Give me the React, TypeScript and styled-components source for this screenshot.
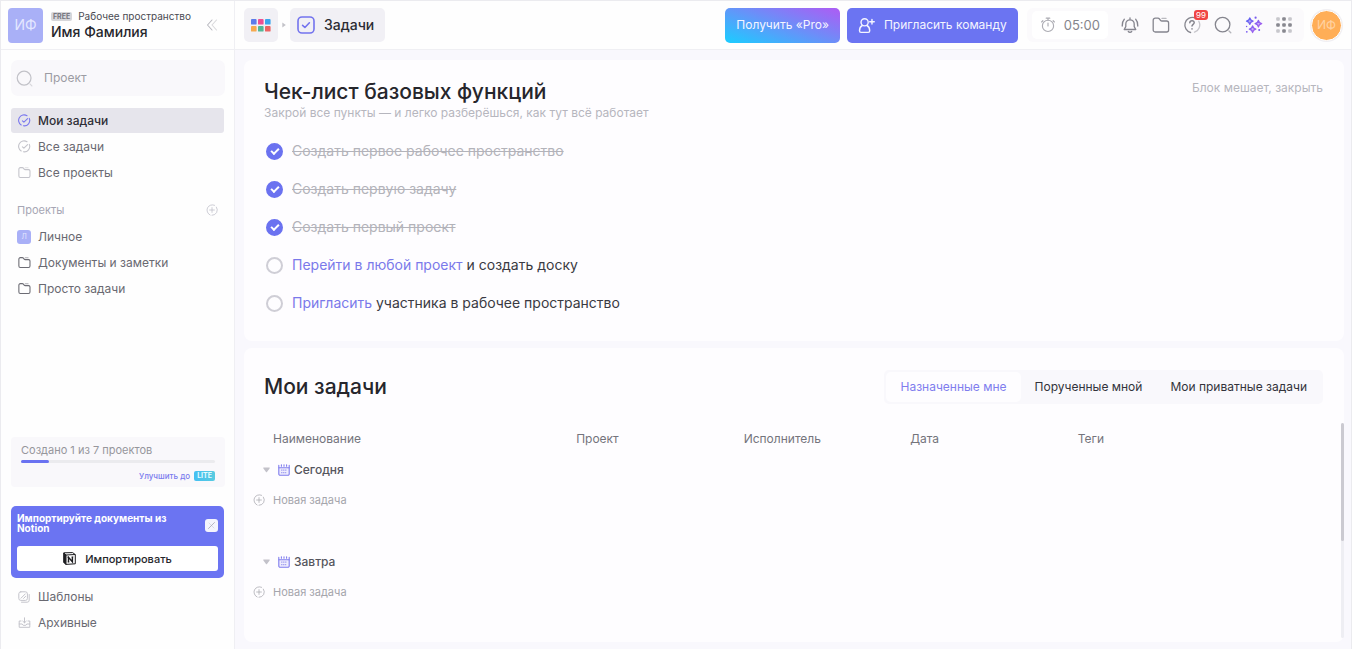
import React from "react";
import styled, { createGlobalStyle, css } from "styled-components";

const Global = createGlobalStyle`
  *, *::before, *::after { box-sizing: border-box; }
  body { margin: 0; font-family: Inter, "Liberation Sans", sans-serif; font-size: 12px; line-height: 16px; color: #2b2b33; background: #f9f8fd; }
  button, input { font: inherit; color: inherit; }
  button { border: 0; padding: 0; background: none; cursor: pointer; }
  a { text-decoration: none; color: inherit; }
  h1, h2, p, ul { margin: 0; padding: 0; }
  ul { list-style: none; }
  svg { display: block; flex: none; }
`;

const Page = styled.div`
  min-height: 100vh;
  display: grid;
  grid-template-columns: 234px minmax(0, 1fr);
  border: 1px solid #ebebef;
`;

/* ---------- sidebar ---------- */
const Sidebar = styled.aside`
  display: flex;
  flex-direction: column;
  background: #fefefe;
  border-right: 1px solid #efeff3;
`;
const Workspace = styled.header`
  display: flex;
  align-items: center;
  gap: 8px;
  height: 49px;
  padding: 0 16px 0 7px;
  border-bottom: 1px solid #efeff3;
`;
const WorkspaceLogo = styled.div`
  width: 35px;
  height: 35px;
  border-radius: 4px;
  display: grid;
  place-items: center;
  background: #a9b0f7;
  color: #e4e7ff;
  font-size: 14px;
`;
const WorkspaceText = styled.div`
  flex: 1;
  min-width: 0;
  white-space: nowrap;
`;
const WorkspaceKind = styled.div`
  display: flex;
  align-items: center;
  gap: 6px;
  font-size: 10px;
  line-height: 14px;
  color: #4a4a52;
`;
const FreeBadge = styled.span`
  padding: 0 2px;
  border-radius: 2px;
  background: #d6d6da;
  color: #77777f;
  font-size: 7px;
  font-weight: 700;
  line-height: 9px;
`;
const WorkspaceName = styled.div`
  font-size: 14px;
  line-height: 18px;
  font-weight: 500;
  color: #26262c;
`;
const IconButton = styled.button`
  display: grid;
  place-items: center;
  color: ${(p) => p.color || "#85858e"};
`;
const Search = styled.label`
  display: flex;
  align-items: center;
  gap: 11px;
  height: 36px;
  margin: 10px 9px 12px 10px;
  padding: 0 5px;
  border-radius: 7px;
  background: #f9f8fb;
  color: #c2c2c8;
`;
const SearchInput = styled.input`
  flex: 1;
  min-width: 0;
  padding: 0;
  border: 0;
  outline: 0;
  background: transparent;
  color: #55555d;
  &::placeholder { color: #9c9ca3; opacity: 1; }
`;
const NavList = styled.ul`
  display: flex;
  flex-direction: column;
  gap: 1px;
  padding: 0 10px;
`;
const NavLink = styled.a<{ $active?: boolean }>`
  display: flex;
  align-items: center;
  gap: 7px;
  height: 25px;
  padding: 0 6px;
  border-radius: 3px;
  font-weight: ${(p) => (p.$active ? 500 : 400)};
  color: ${(p) => (p.$active ? "#2e2e36" : "#696971")};
  background: ${(p) => (p.$active ? "#e6e5ec" : "transparent")};
`;
const NavIcon = styled.span<{ $tone?: string }>`
  width: 14px;
  display: grid;
  place-items: center;
  color: ${(p) => p.$tone || "#c4c4cb"};
`;
const ProjectMark = styled.span`
  width: 14px;
  height: 14px;
  border-radius: 3px;
  display: grid;
  place-items: center;
  background: #a9b0f7;
  color: #e4e7ff;
  font-size: 7px;
  line-height: 8px;
`;
const SectionHead = styled.div`
  display: flex;
  align-items: center;
  justify-content: space-between;
  padding: 0 16px;
  margin: 17px 0 6px;
  font-size: 11px;
  height: 16px;
  color: #a6a6b4;
`;
const SidebarBottom = styled.div`
  margin-top: auto;
  padding: 8px 0 16px;
`;
const Quota = styled.section`
  margin: 0 9px 19px 10px;
  height: 50px;
  padding: 5px 10px 4px;
  border-radius: 4px;
  background: #f9f8fb;
`;
const QuotaText = styled.p`
  font-size: 11px;
  color: #96969c;
`;
const QuotaTrack = styled.div`
  height: 3px;
  margin: 2px 0 4px;
  border-radius: 2px;
  background: #ebebee;
`;
const QuotaFill = styled.div`
  height: 100%;
  border-radius: 2px;
  background: #6a72f1;
`;
const Upgrade = styled.a`
  display: flex;
  align-items: center;
  justify-content: flex-end;
  gap: 4px;
  height: 18px;
  font-size: 8px;
  font-weight: 500;
  color: #7b7cee;
`;
const LiteBadge = styled.span`
  padding: 0 3px;
  border-radius: 2px;
  background: linear-gradient(90deg, #45c0f2, #58cbe0);
  color: #e4fbff;
  font-size: 7px;
  font-weight: 700;
  line-height: 10px;
`;
const Import = styled.section`
  margin: 0 10px 6px;
  padding: 7px 6px;
  border-radius: 5px;
  background: #6b74f2;
`;
const ImportHead = styled.div`
  display: flex;
  justify-content: space-between;
  align-items: center;
  gap: 12px;
  margin-bottom: 13px;
`;
const ImportTitle = styled.p`
  font-size: 10px;
  line-height: 10px;
  font-weight: 700;
  color: #fff;
`;
const CloseButton = styled.button`
  width: 13px;
  height: 13px;
  margin-top: 4px;
  flex: none;
  display: grid;
  place-items: center;
  border-radius: 3px;
  background: #f4f4fd;
  color: #a5a5b4;
`;
const ImportButton = styled.button`
  width: 100%;
  height: 25px;
  display: flex;
  align-items: center;
  justify-content: center;
  gap: 9px;
  border-radius: 3px;
  background: #fff;
  color: #26262c;
  font-size: 11px;
  font-weight: 500;
`;

/* ---------- top bar ---------- */
const Main = styled.main`
  display: flex;
  flex-direction: column;
  min-width: 0;
`;
const Topbar = styled.header`
  display: flex;
  align-items: center;
  height: 49px;
  padding: 0 9px;
  background: #fefefe;
  border-bottom: 1px solid #efeff3;
  white-space: nowrap;
`;
const Crumb = styled.button`
  display: flex;
  align-items: center;
  justify-content: center;
  gap: 9px;
  height: 34px;
  min-width: 34px;
  padding: 0 7px;
  border-radius: 5px;
  background: #f1f0f5;
  font-size: 14px;
  font-weight: 500;
`;
const CrumbLabel = styled.span`
  padding-right: 4px;
`;
const CrumbArrow = styled.span`
  padding: 0 4px;
  color: #c2c2c8;
`;
const Actions = styled.div`
  display: flex;
  align-items: center;
  gap: 7px;
  margin-left: auto;
`;
const ActionButton = styled.button<{ $pro?: boolean }>`
  display: flex;
  align-items: center;
  gap: 9px;
  height: 35px;
  padding: 0 11px;
  border-radius: 5px;
  color: #f4f5ff;
  background: ${(p) => (p.$pro ? "linear-gradient(20deg, #21c8ff 5%, #6f8cf8 55%, #a860f4 95%)" : "#6b74f2")};
`;
const Tools = styled.div`
  display: flex;
  align-items: center;
  gap: 13px;
  height: 34px;
  margin-left: 2px;
  padding: 0 12px 0 5px;
  border-radius: 6px;
  background: #fbfafc;
`;
const Timer = styled.button`
  display: flex;
  align-items: center;
  gap: 8px;
  height: 28px;
  padding: 0 8px;
  border-radius: 5px;
  background: #fff;
  color: #85858c;
  font-size: 13px;
`;
const TimerIcon = styled.span`
  color: #acacb3;
`;
const HelpWrap = styled.span`
  position: relative;
`;
const Count = styled.span`
  position: absolute;
  top: -6px;
  left: 11px;
  padding: 0 2px;
  border-radius: 3px;
  background: #f04444;
  color: #fff;
  font-size: 8px;
  line-height: 10px;
`;
const Avatar = styled.button`
  width: 31px;
  height: 31px;
  border: 1px solid #fff;
  border-radius: 50%;
  background: #ffae57;
  color: #ffd3a3;
  font-size: 12px;
  box-shadow: 0 0 0 1px #f0eff3;
`;

/* ---------- content ---------- */
const Content = styled.div`
  flex: 1;
  display: flex;
  flex-direction: column;
  gap: 7px;
  padding: 10px 7px 9px 9px;
`;
const Card = styled.section<{ $grow?: boolean }>`
  border-radius: 8px;
  background: #fefdff;
  ${(p) => p.$grow && css`
    flex: 1;
    display: flex;
    flex-direction: column;
  `}
`;
const CardHead = styled.div<{ $centered?: boolean }>`
  display: flex;
  justify-content: space-between;
  align-items: ${(p) => (p.$centered ? "center" : "flex-start")};
  padding: ${(p) => (p.$centered ? 22 : 19)}px 21px 0 20px;
`;
const Title = styled.h2`
  font-size: 21px;
  line-height: 26px;
  font-weight: 500;
  color: #26262c;
`;
const Hint = styled.p`
  color: #b6b6be;
`;
const Dismiss = styled.button`
  margin-top: 1px;
  color: #b6b6be;
`;
const Checklist = styled.ul`
  display: flex;
  flex-direction: column;
  gap: 14px;
  padding: 18px 22px 26px;
`;
const CheckItem = styled.li`
  display: flex;
  align-items: center;
  gap: 9px;
  height: 24px;
  font-size: 14px;
  line-height: 24px;
`;
const Tick = styled.input`
  appearance: none;
  width: 17px;
  height: 17px;
  margin: 0;
  display: grid;
  place-items: center;
  border: 2px solid #cfced6;
  border-radius: 50%;
  &:checked { border-color: #6b72f0; background: #6b72f0; }
  &:checked::after {
    content: "";
    width: 8px;
    height: 5px;
    margin-bottom: 2px;
    border: solid #fff;
    border-width: 0 0 2px 2px;
    transform: rotate(-45deg);
  }
`;
const CheckLabel = styled.label<{ $done: boolean }>`
  color: ${(p) => (p.$done ? "#b3b3ba" : "#3a3a42")};
  text-decoration: ${(p) => (p.$done ? "line-through" : "none")};
`;
const AccentLink = styled.a`
  color: #7a79ea;
`;
const Tabs = styled.div`
  display: flex;
  height: 34px;
  padding: 2px;
  border-radius: 5px;
  background: #f9f8fc;
`;
const Tab = styled.button<{ $active?: boolean }>`
  padding: 0 14px;
  border-radius: 5px;
  color: ${(p) => (p.$active ? "#807dee" : "#33333b")};
  background: ${(p) => (p.$active ? "#fefdff" : "transparent")};
`;
const TaskArea = styled.div`
  flex: 1;
  display: flex;
  align-items: stretch;
  margin: 19px 0 4px 9px;
`;
const TableWrap = styled.div`
  flex: 1;
  min-width: 0;
`;
const Table = styled.table`
  width: 100%;
  table-layout: fixed;
  border-collapse: collapse;
  text-align: left;
`;
const HeadCell = styled.th<{ $share: number; $first?: boolean }>`
  width: ${(p) => p.$share}%;
  height: 31px;
  padding: 0 0 0 ${(p) => (p.$first ? 20 : 0)}px;
  font-weight: 400;
  color: #74747c;
`;
const GroupCell = styled.td`
  height: 31px;
  padding: 0 0 0 10px;
`;
const GroupButton = styled.button`
  display: flex;
  align-items: center;
  gap: 8px;
  color: #55555d;
  font-weight: 500;
`;
const GroupName = styled.span`
  display: flex;
  align-items: center;
  gap: 4px;
`;
const AccentIcon = styled.span`
  color: #807dee;
`;
const NewCell = styled.td`
  height: 61px;
  padding: 7px 0 0;
  vertical-align: top;
`;
const NewButton = styled.button`
  display: flex;
  align-items: center;
  gap: 8px;
  font-size: 11px;
  color: #a5a5ac;
`;
const ScrollTrack = styled.div`
  width: 3px;
  border-radius: 2px;
  background: #eeeef3;
`;
const ScrollThumb = styled.div`
  height: 55%;
  border-radius: 2px;
  background: #cbcad1;
`;

/* ---------- icons ---------- */
type IconProps = { size?: number; children: React.ReactNode; box?: number; sw?: number };
const Icon = ({ size = 18, box = 18, sw = 1.3, children }: IconProps) => (
  <svg width={size} height={size} viewBox={`0 0 ${box} ${box}`} fill="none" stroke="currentColor" strokeWidth={sw} strokeLinecap="round" strokeLinejoin="round" aria-hidden="true">
    {children}
  </svg>
);
const LensIcon = ({ size = 18 }) => (
  <Icon size={size}><circle cx="8.6" cy="8.6" r="7.3" /><path d="M15 15l1.8 1.8" opacity=".6" /></Icon>
);
const TaskIcon = () => (
  <Icon size={13} box={13} sw={1.1}><path d="M3.2 11A5.4 5.4 0 1 1 9 1.7M11.3 4.4A5.4 5.4 0 0 1 5.4 11.8" /><path d="M4.4 6.8l1.5 1.4L9.6 4.6" /></Icon>
);
const FolderPath = "M1.2 14V4.2a2 2 0 0 1 2-2h2.7c.7 0 1.2.3 1.6.8l1 1.3c.4.5.9.7 1.5.7h4.6a2 2 0 0 1 2 2V14a2 2 0 0 1-2 2H3.2a2 2 0 0 1-2-2z";
const FolderIcon = ({ size = 13, sw = 1.5 }) => (
  <Icon size={size} sw={sw}><path d={FolderPath} /><path d="M10 2.4h4" opacity=".55" /></Icon>
);
const PlusCircle = () => (
  <Icon size={12} box={12} sw={0.9}><path d="M4.1 11A5.3 5.3 0 1 1 8.6 1.3M10.4 3.1A5.3 5.3 0 0 1 6 11.3" opacity=".8" /><path d="M6 3.6v4.800M3.600 6h4.800" opacity=".8" /></Icon>
);
const CalendarIcon = () => (
  <Icon size={12} box={12} sw={1.1}>
    <path d="M.8 3.8V10a1.3 1.3 0 0 0 1.3 1.3h7.8A1.3 1.3 0 0 0 11.2 10V3.8z" fill="currentColor" fillOpacity=".12" />
    <path d="M.8 3.6V1.2M11.2 3.6V1.2M3.4.8v1.4M6 .8v1.4M8.6.8v1.4" />
    <path d="M3.2 6.2h6M3.2 8.6h5" strokeWidth="1.3" strokeLinecap="butt" strokeDasharray="1.2 .8" opacity=".8" />
  </Icon>
);
const NotionIcon = () => (
  <svg width="13" height="13" viewBox="0 0 13 13" fill="none" stroke="#1d1d20" aria-hidden="true">
    <path d="M.7 1l2 2v9.4L.7 10.2z" fill="#1d1d20" />
    <path d="M.8.8l8.8-.2 2.7 2v9.2l-9.4.6V3.1L.8.8M2.9 3l9.4-.5" strokeWidth="1" />
    <path d="M5.5 10V5.4l3.9 4.4V5" strokeWidth="1.4" />
    <path d="M4.5 5.3h1.4M8.6 4.9h1.7M4.7 10.1h1.6" strokeWidth=".9" />
  </svg>
);
const GridIcon = () => (
  <svg width="20" height="13" viewBox="0 0 20 13" aria-hidden="true">
    {["#5b7bea", "#ee4f93", "#3da5ec", "#f6a94f", "#52b796", "#ec6464"].map((c, i) => (
      <rect key={c} x={(i % 3) * 7} y={Math.floor(i / 3) * 7} width="5.6" height="5.6" rx=".9" fill={c} />
    ))}
  </svg>
);
const DotsIcon = () => (
  <svg width="16" height="16" viewBox="0 0 16 16" fill="#7b7b84" aria-hidden="true">
    {[0, 1, 2].flatMap((r) => [0, 1, 2].map((c) => {
      const corner = r !== 1 && c !== 1;
      return <rect key={`${r}${c}`} x={c * 6 + 0.2} y={r * 6 + 0.2} width="3.6" height="3.6" rx="1" opacity={corner ? 0.4 : 0.9} />;
    }))}
  </svg>
);
const SparkIcon = () => (
  <svg width="18" height="18" viewBox="0 0 18 18" aria-hidden="true">
    <defs>
      <linearGradient id="spark" gradientUnits="userSpaceOnUse" x1="2" y1="2" x2="16" y2="14">
        <stop offset="0" stopColor="#5b62f2" /><stop offset="1" stopColor="#b061ee" />
      </linearGradient>
    </defs>
    <g fill="url(#spark)" fillOpacity=".5" stroke="url(#spark)" strokeWidth="1.3" strokeLinejoin="round">
      <path d="M4.8 1.8c.4 2.1 1.2 2.9 3.3 3.3-2.1.4-2.9 1.2-3.3 3.3-.4-2.1-1.2-2.9-3.3-3.3 2.1-.4 2.9-1.2 3.3-3.3z" />
      <path d="M13.4 4.4c.4 2.1 1.2 2.9 3.3 3.3-2.1.4-2.9 1.2-3.3 3.3-.4-2.1-1.2-2.9-3.3-3.3 2.1-.4 2.9-1.2 3.3-3.3z" />
      <path d="M7.6 9.9c.4 2.1 1.2 2.9 3.3 3.3-2.1.4-2.9 1.2-3.3 3.3-.4-2.1-1.2-2.9-3.3-3.3 2.1-.4 2.9-1.2 3.3-3.3z" />
    </g>
    <g fill="#7a5cf0">
      <circle cx="10.6" cy="1.7" r="1.1" /><circle cx="1.6" cy="10.5" r=".7" /><circle cx="1.8" cy="15.8" r=".9" /><circle cx="14.2" cy="14" r="1" />
    </g>
  </svg>
);
const Triangle = () => (
  <svg width="7" height="6" viewBox="0 0 7 6" fill="#c3c2ca" aria-hidden="true"><path d="M.8.5h5.4c.5 0 .7.5.4.9L4 4.9a.7.7 0 0 1-1 0L.4 1.4C.1 1 .3.5.8.5z" /></svg>
);

/* ---------- data ---------- */
const steps = [
  { done: true, link: "", text: "Создать первое рабочее пространство" },
  { done: true, link: "", text: "Создать первую задачу" },
  { done: true, link: "", text: "Создать первый проект" },
  { done: false, link: "Перейти в любой проект", text: " и создать доску" },
  { done: false, link: "Пригласить", text: " участника в рабочее пространство" },
];
const columns: [string, number][] = [["Наименование", 29.7], ["Проект", 15.4], ["Исполнитель", 15.3], ["Дата", 15.4], ["Теги", 24.2]];
const quota = { used: 1, total: 7 };

export default function App() {
  return (
    <>
      <Global />
      <Page>
        <Sidebar>
          <Workspace>
            <WorkspaceLogo>ИФ</WorkspaceLogo>
            <WorkspaceText>
              <WorkspaceKind><FreeBadge>FREE</FreeBadge>Рабочее пространство</WorkspaceKind>
              <WorkspaceName>Имя Фамилия</WorkspaceName>
            </WorkspaceText>
            <IconButton color="#b9b9c0" aria-label="Свернуть">
              <Icon size={12} box={12} sw={1.1}><path d="M6 1L1.5 6 6 11" /><path d="M10.5 1L6 6l4.5 5" opacity=".55" /></Icon>
            </IconButton>
          </Workspace>
          <Search>
            <LensIcon size={17} />
            <SearchInput type="text" placeholder="Проект" aria-label="Проект" />
          </Search>
          <nav>
            <NavList>
              <li><NavLink href="#my" $active><NavIcon $tone="#7b78ee"><TaskIcon /></NavIcon>Мои задачи</NavLink></li>
              <li><NavLink href="#all"><NavIcon><TaskIcon /></NavIcon>Все задачи</NavLink></li>
              <li><NavLink href="#projects"><NavIcon><FolderIcon /></NavIcon>Все проекты</NavLink></li>
            </NavList>
            <SectionHead>
              Проекты
              <IconButton color="#bbbbc6" aria-label="Добавить проект"><PlusCircle /></IconButton>
            </SectionHead>
            <NavList>
              <li><NavLink href="#personal"><ProjectMark>Л</ProjectMark>Личное</NavLink></li>
              <li><NavLink href="#docs"><NavIcon $tone="#6c6c74"><FolderIcon /></NavIcon>Документы и заметки</NavLink></li>
              <li><NavLink href="#simple"><NavIcon $tone="#6c6c74"><FolderIcon /></NavIcon>Просто задачи</NavLink></li>
            </NavList>
          </nav>
          <SidebarBottom>
            <Quota>
              <QuotaText>Создано 1 из 7 проектов</QuotaText>
              <QuotaTrack role="progressbar" aria-valuenow={quota.used} aria-valuemax={quota.total} aria-label="Создано проектов">
                <QuotaFill style={{ width: `${(quota.used / quota.total) * 100}%` }} />
              </QuotaTrack>
              <Upgrade href="#upgrade">Улучшить до <LiteBadge>LITE</LiteBadge></Upgrade>
            </Quota>
            <Import>
              <ImportHead>
                <ImportTitle>Импортируйте документы из Notion</ImportTitle>
                <CloseButton aria-label="Закрыть"><Icon size={9} box={9} sw={0.8}><path d="M1.5 7.5l6-6" /><path d="M2 2l5 5" opacity=".4" /></Icon></CloseButton>
              </ImportHead>
              <ImportButton><NotionIcon />Импортировать</ImportButton>
            </Import>
            <NavList>
              <li><NavLink href="#templates">
                <NavIcon><Icon size={12} box={12} sw={1}><rect x=".8" y=".8" width="8.6" height="8.6" rx="2" /><path d="M11.2 3.5v5.7a2 2 0 0 1-2 2H3.5M3 7.2l4.3-4.3M5.6 7.4l2-2" /></Icon></NavIcon>
                Шаблоны
              </NavLink></li>
              <li><NavLink href="#archive">
                <NavIcon><Icon size={13} box={13} sw={1}><path d="M3 5H1.2v6.3h10.6V5H10M1.2 8h3l1 1.3h2.6l1-1.3h3M6.5 1.8v4.8M4.8 5.2l1.7 1.6 1.7-1.6" /></Icon></NavIcon>
                Архивные
              </NavLink></li>
            </NavList>
          </SidebarBottom>
        </Sidebar>

        <Main>
          <Topbar>
            <Crumb aria-label="Все пространства"><GridIcon /></Crumb>
            <CrumbArrow><svg width="4" height="6" viewBox="0 0 4 6" fill="currentColor" aria-hidden="true"><path d="M.3.4L3.8 3 .3 5.6z" /></svg></CrumbArrow>
            <Crumb>
              <svg width="18" height="18" viewBox="0 0 18 18" fill="none" stroke="#7373ee" strokeWidth="1.6" strokeLinecap="round" strokeLinejoin="round" aria-hidden="true">
                <rect x="1" y="1" width="16" height="16" rx="4" /><path d="M5.6 9.3l2.3 2.2 4.5-4.7" />
              </svg>
              <CrumbLabel>Задачи</CrumbLabel>
            </Crumb>
            <Actions>
              <ActionButton $pro>Получить «Pro»</ActionButton>
              <ActionButton>
                <Icon size={17} sw={1.5}><circle cx="7" cy="5.6" r="3.8" /><path d="M4.5 9C2.5 10 1.6 12.3 1.6 14.6c0 1 .6 1.7 1.6 1.7h7.6c1 0 1.6-.7 1.6-1.7 0-2.3-.9-4.6-2.900-5.600M14.800 2.600v4.800M12.400 5h4.800" /></Icon>
                Пригласить команду
              </ActionButton>
              <Tools>
                <Timer>
                  <TimerIcon><Icon size={16}><circle cx="9" cy="10" r="6.3" /><path d="M9 6.8V10M7 1.3h4M9 1.5v2M3.2 4.2L1.8 5.6M14.8 4.2l1.4 1.4" /></Icon></TimerIcon>
                  05:00
                </Timer>
                <IconButton aria-label="Уведомления">
                  <Icon><path d="M4.8 8a4.2 4.2 0 0 1 8.4 0v2.6l1.6 2.9H3.2l1.6-2.9zM7.3 15.5c.8 1 2.6 1 3.4 0M9 1.8v1.6M3.3 3.3C1.7 5 1.1 7.5 1.2 10M14.7 3.3c1.6 1.7 2.2 4.2 2.1 6.7" /></Icon>
                </IconButton>
                <IconButton aria-label="Файлы"><FolderIcon size={18} sw={1.3} /></IconButton>
                <HelpWrap>
                  <IconButton aria-label="Помощь">
                    <Icon><path d="M11.5 1.6A7.7 7.7 0 1 0 7.6 16.5" /><path d="M15.8 5.2a7.7 7.7 0 0 1-4.3 11" opacity=".45" /><path d="M6.8 6.8c.2-2.9 4.6-2.6 4.4 0-.1 1.5-2.2 1.7-2.2 3.3M9 12.7v.2" strokeWidth="1.5" /></Icon>
                  </IconButton>
                  <Count>99</Count>
                </HelpWrap>
                <IconButton aria-label="Поиск"><LensIcon /></IconButton>
                <IconButton aria-label="Ассистент"><SparkIcon /></IconButton>
                <IconButton aria-label="Меню"><DotsIcon /></IconButton>
              </Tools>
              <Avatar>ИФ</Avatar>
            </Actions>
          </Topbar>

          <Content>
            <Card>
              <CardHead>
                <div>
                  <Title>Чек-лист базовых функций</Title>
                  <Hint>Закрой все пункты — и легко разберёшься, как тут всё работает</Hint>
                </div>
                <Dismiss>Блок мешает, закрыть</Dismiss>
              </CardHead>
              <Checklist>
                {steps.map((s, i) => (
                  <CheckItem key={s.text}>
                    <Tick type="checkbox" id={`step-${i}`} defaultChecked={s.done} />
                    <CheckLabel htmlFor={`step-${i}`} $done={s.done}>
                      {s.link && <AccentLink href="#step">{s.link}</AccentLink>}{s.text}
                    </CheckLabel>
                  </CheckItem>
                ))}
              </Checklist>
            </Card>

            <Card $grow>
              <CardHead $centered>
                <Title>Мои задачи</Title>
                <Tabs>
                  <Tab $active>Назначенные мне</Tab>
                  <Tab>Порученные мной</Tab>
                  <Tab>Мои приватные задачи</Tab>
                </Tabs>
              </CardHead>
              <TaskArea>
                <TableWrap>
                  <Table>
                    <thead>
                      <tr>{columns.map(([name, share], i) => <HeadCell key={name} $share={share} $first={i === 0}>{name}</HeadCell>)}</tr>
                    </thead>
                    <tbody>
                      {["Сегодня", "Завтра"].map((day) => (
                        <React.Fragment key={day}>
                          <tr><GroupCell colSpan={5}><GroupButton><Triangle /><GroupName><AccentIcon><CalendarIcon /></AccentIcon>{day}</GroupName></GroupButton></GroupCell></tr>
                          <tr><NewCell colSpan={5}><NewButton><PlusCircle />Новая задача</NewButton></NewCell></tr>
                        </React.Fragment>
                      ))}
                    </tbody>
                  </Table>
                </TableWrap>
                <ScrollTrack><ScrollThumb /></ScrollTrack>
              </TaskArea>
            </Card>
          </Content>
        </Main>
      </Page>
    </>
  );
}
